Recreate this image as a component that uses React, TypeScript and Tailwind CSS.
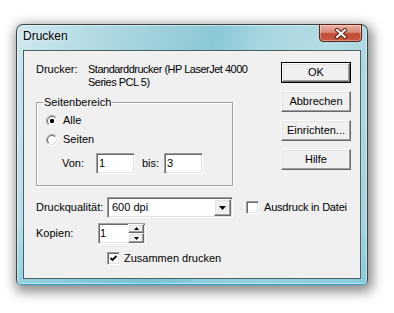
import type { ReactNode } from 'react'

const sunken =
  'border border-t-[#a0a0a0] border-l-[#a0a0a0] border-r-white border-b-white shadow-[inset_1px_1px_0_#696969,inset_-1px_-1px_0_#e3e3e3] bg-white'
const raised =
  'border border-t-white border-l-white border-r-[#696969] border-b-[#696969] shadow-[inset_-1px_-1px_0_#a0a0a0,inset_1px_1px_0_#e3e3e3] bg-[#f0f0f0]'

function Button({ label, isDefault }: { label: string; isDefault?: boolean }) {
  if (isDefault) {
    return (
      <div className="h-[21px] w-[70px] border border-black">
        <div className={`${raised} flex h-full items-center justify-center`}>{label}</div>
      </div>
    )
  }
  return <div className={`${raised} flex h-[21px] w-[70px] items-center justify-center`}>{label}</div>
}

function Radio({ checked, id }: { checked?: boolean; id: string }) {
  return (
    <svg width="12" height="12" viewBox="0 0 12 12" className="shrink-0">
      <defs>
        <linearGradient id={`o${id}`} x1="0" y1="0" x2="1" y2="1">
          <stop offset="0.45" stopColor="#a0a0a0" />
          <stop offset="0.55" stopColor="#ffffff" />
        </linearGradient>
        <linearGradient id={`i${id}`} x1="0" y1="0" x2="1" y2="1">
          <stop offset="0.45" stopColor="#696969" />
          <stop offset="0.55" stopColor="#e3e3e3" />
        </linearGradient>
      </defs>
      <circle cx="6" cy="6" r="5.5" fill="none" stroke={`url(#o${id})`} />
      <circle cx="6" cy="6" r="4.5" fill="#ffffff" stroke={`url(#i${id})`} />
      {checked && <rect x="4" y="4" width="4" height="4" rx="1.2" fill="#000" />}
    </svg>
  )
}

function Checkbox({ checked }: { checked?: boolean }) {
  return (
    <div className={`${sunken} h-[13px] w-[13px] shrink-0`}>
      {checked && (
        <svg width="11" height="11" viewBox="0 0 11 11">
          <polyline points="2.5,5 4.5,7 8.5,3" fill="none" stroke="#000" strokeWidth="1.8" />
        </svg>
      )}
    </div>
  )
}

function Arrow({ up, size }: { up?: boolean; size: number }) {
  const w = size
  const h = Math.ceil(size / 2)
  return (
    <svg width={w} height={h} viewBox={`0 0 ${w} ${h}`}>
      <polygon points={up ? `${w / 2},0 ${w},${h} 0,${h}` : `0,0 ${w},0 ${w / 2},${h}`} fill="#000" />
    </svg>
  )
}

function Row({ children, className }: { children: ReactNode; className?: string }) {
  return <div className={`flex items-center ${className ?? ''}`}>{children}</div>
}

export default function App() {
  return (
    <div className="h-[313px] w-[394px] bg-white pl-[16px] pt-[24px] font-['Liberation_Sans',Arial,sans-serif] text-[11px] leading-[13px] text-black">
      <div className="flex h-[261px] w-[352px] flex-col rounded-t-[7px] rounded-b-[5px] border border-[#3a4448] border-b-[#2a9fc4] bg-[linear-gradient(180deg,transparent_75%,rgba(70,185,215,0.3)_100%),linear-gradient(105deg,#cfe8ee_0%,#a9d6df_25%,#97cdd8_40%,#8ac7d4_48%,#a8d7e0_60%,#b4dce4_75%,#a2d3dd_100%)] px-[6px] pb-[5px] shadow-[inset_0_0_0_1px_rgba(255,255,255,0.45),2px_4px_12px_3px_rgba(0,0,0,0.45)]">
        <div className="flex h-[25px] items-start justify-between">
          <span className="pt-[4px] text-[12px] leading-[15px] [text-shadow:0_0_6px_white]">Drucken</span>
          <div className="-mr-[1px] -mt-[1px] flex h-[18px] w-[43px] items-center justify-center rounded-b-[4px] border border-[#5a2418] bg-[linear-gradient(180deg,#eab0a2_0%,#d88a78_45%,#c04a32_55%,#c65a40_100%)] shadow-[inset_0_0_0_1px_rgba(255,255,255,0.35)]">
            <svg width="14" height="11" viewBox="0 0 14 11">
              <path d="M3 2 L11 9 M11 2 L3 9" stroke="#4a1a10" strokeWidth="4" strokeLinecap="round" />
              <path d="M3 2 L11 9 M11 2 L3 9" stroke="#ffffff" strokeWidth="2.2" strokeLinecap="round" />
            </svg>
          </div>
        </div>
        <div className="flex flex-1 flex-col border border-[#4d5f67] bg-[#f0f0f0] pl-[12px]">
          <div className="flex pt-[11px]">
            <div className="flex w-[197px] flex-col pt-[1px]">
              <div className="flex">
                <span className="w-[52px] shrink-0">Drucker:</span>
                <span className="whitespace-nowrap tracking-[-0.5px]">
                  Standarddrucker (HP LaserJet 4000
                  <br />
                  Series PCL 5)
                </span>
              </div>
              <div className="relative mt-[13px] flex flex-col border border-[#a0a0a0] pb-[11px] pl-[9px] pt-[11px] shadow-[inset_1px_1px_0_white,1px_1px_0_white]">
                <span className="absolute -top-[7px] left-[6px] bg-[#f0f0f0] px-[1px]">Seitenbereich</span>
                <Row className="h-[13px] gap-[5px]">
                  <Radio id="a" checked />
                  <span>Alle</span>
                </Row>
                <Row className="mt-[6px] h-[13px] gap-[5px]">
                  <Radio id="b" />
                  <span>Seiten</span>
                </Row>
                <Row className="mt-[7px] h-[21px] pl-[16px]">
                  <span className="w-[34px]">Von:</span>
                  <div className={`${sunken} flex h-[21px] w-[39px] items-center pl-[2px]`}>1</div>
                  <span className="ml-[7px] w-[22px]">bis:</span>
                  <div className={`${sunken} flex h-[21px] w-[39px] items-center pl-[2px]`}>3</div>
                </Row>
              </div>
            </div>
            <div className="ml-[48px] flex flex-col gap-[8px]">
              <Button label="OK" isDefault />
              <Button label="Abbrechen" />
              <Button label="Einrichten..." />
              <Button label="Hilfe" />
            </div>
          </div>
          <Row className="mt-[11px] h-[21px]">
            <span className="w-[71px]">Druckqualität:</span>
            <div className={`${sunken} flex h-[21px] w-[126px] items-center justify-between pl-[4px]`}>
              <span>600 dpi</span>
              <div className={`${raised} mr-[1px] flex h-[17px] w-[17px] items-center justify-center`}>
                <Arrow size={7} />
              </div>
            </div>
            <div className="ml-[13px] flex items-center gap-[5px]">
              <Checkbox />
              <span className="tracking-[-0.2px]">Ausdruck in Datei</span>
            </div>
          </Row>
          <Row className="mt-[5px] h-[21px]">
            <span className="w-[62px]">Kopien:</span>
            <div className={`${sunken} flex h-[21px] w-[48px] items-center justify-between pl-[1px]`}>
              <span>1</span>
              <div className="mr-[1px] flex h-[19px] w-[16px] flex-col">
                <div className={`${raised} flex h-[9px] items-center justify-center`}>
                  <Arrow up size={5} />
                </div>
                <div className={`${raised} flex h-[10px] items-center justify-center`}>
                  <Arrow size={5} />
                </div>
              </div>
            </div>
          </Row>
          <Row className="mt-[8px] h-[13px] gap-[4px] pl-[71px]">
            <Checkbox checked />
            <span>Zusammen drucken</span>
          </Row>
        </div>
      </div>
    </div>
  )
}
